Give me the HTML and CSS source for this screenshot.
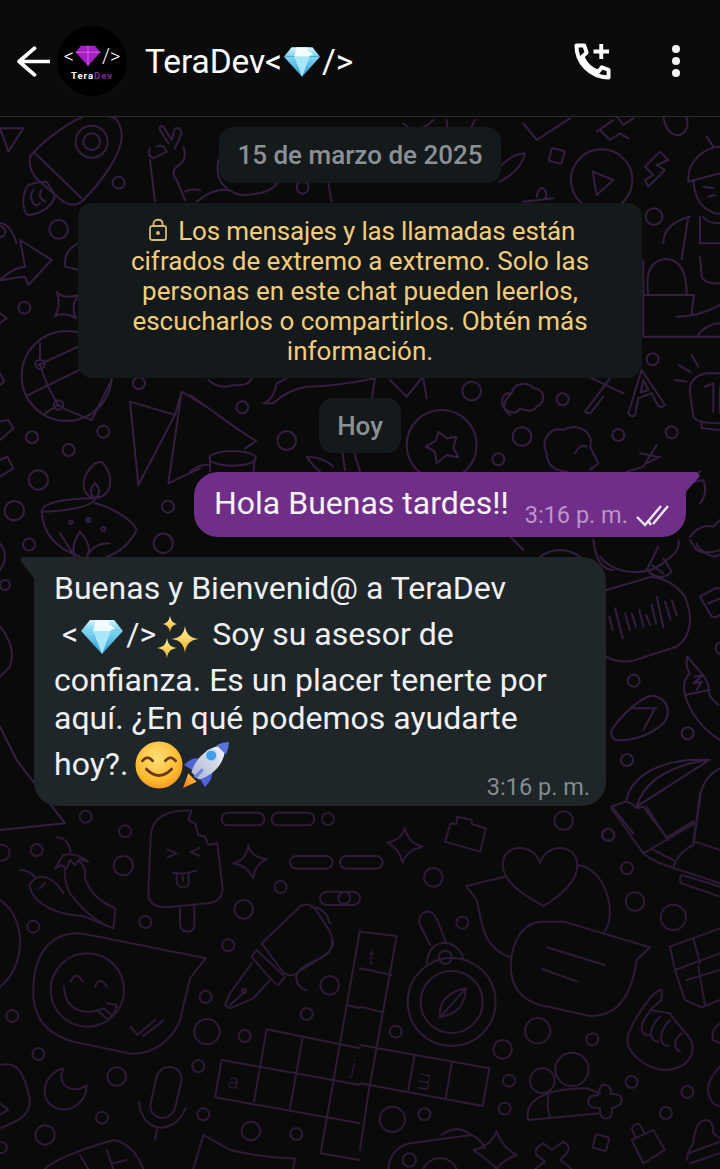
FILE: index.html
```html
<!DOCTYPE html>
<html lang="es">
<head>
<meta charset="utf-8">
<title>TeraDev</title>
<link rel="stylesheet" href="styles.css">
</head>
<body>
<svg class="defs" width="0" height="0" aria-hidden="true">
  <defs>
    <linearGradient id="gemTop" x1="0" y1="0" x2="0" y2="1"><stop offset="0" stop-color="#d8f6ff"/><stop offset="1" stop-color="#6fd0f2"/></linearGradient>
    <linearGradient id="gemLow" x1="0" y1="0" x2="0" y2="1"><stop offset="0" stop-color="#7fd6f5"/><stop offset="1" stop-color="#2f9bd6"/></linearGradient>
    <linearGradient id="spark" x1="0" y1="0" x2="0" y2="1"><stop offset="0" stop-color="#fff3a8"/><stop offset="1" stop-color="#f2b01e"/></linearGradient>
    <radialGradient id="face" cx=".45" cy=".35" r=".75"><stop offset="0" stop-color="#ffe07a"/><stop offset=".65" stop-color="#fdb92e"/><stop offset="1" stop-color="#f08a16"/></radialGradient>
    <linearGradient id="flame" x1="1" y1="0" x2="0" y2="1"><stop offset="0" stop-color="#ffd23e"/><stop offset="1" stop-color="#f5761c"/></linearGradient>
    <linearGradient id="hull" x1="0" y1="1" x2="1" y2="0"><stop offset="0" stop-color="#a9b2cc"/><stop offset="1" stop-color="#f4f6fb"/></linearGradient>
    <symbol id="gem" viewBox="0 0 40 32">
      <path fill="url(#gemLow)" d="M1 11H39L20 32Z"/>
      <path fill="#a8e6fb" d="M12 11H28L20 32Z"/>
      <path fill="url(#gemTop)" d="M9 1H31L39 11H1Z"/>
      <path fill="#f0fcff" d="M14 1H26L28 11H12Z"/>
      <path fill="#fff" d="M27 5l5 4-5 1z"/>
    </symbol>
    <symbol id="sparkles" viewBox="0 0 44 44">
      <path fill="url(#spark)" d="M29 11C30 19 34 23 43 24C34 25 30 29 29 38C28 29 24 25 15 24C24 23 28 19 29 11Z"/>
      <path fill="url(#spark)" d="M14 1C15 6 17 8 21 9C17 10 15 12 14 17C13 12 11 10 7 9C11 8 13 6 14 1Z"/>
      <path fill="url(#spark)" d="M11 23C12 29 14 32 21 33C14 34 12 37 11 43C10 37 8 34 1 33C8 32 10 29 11 23Z"/>
    </symbol>
    <symbol id="smile" viewBox="0 0 46 46">
      <circle cx="23" cy="23" r="22.500" fill="url(#face)"/>
      <path fill="none" stroke="#6b3a12" stroke-width="2.600" stroke-linecap="round" d="M7 19Q12 13 17 19M29 19Q34 13 39 19"/>
      <path fill="none" stroke="#6b3a12" stroke-width="2.800" stroke-linecap="round" d="M11 27Q23 39 35 27"/>
    </symbol>
    <symbol id="rocket" viewBox="0 0 46 46">
      <path fill="url(#flame)" d="M1 45L6 31L14 39Z"/>
      <path fill="#4d63d8" d="M2 23Q9 15 18 17L10 28Z"/>
      <path fill="#4d63d8" d="M22 44Q30 37 29 27L17 36Z"/>
      <path fill="url(#hull)" d="M9 30C13 16 26 4 41 4C43 19 31 33 16 37Z"/>
      <path fill="#5b73e0" d="M33 4Q39 1 45 1Q45 7 42 13Z"/>
      <circle cx="28" cy="14" r="5.500" fill="#3fa0ea" stroke="#c7d4f0" stroke-width="1.500"/>
      <path fill="#6e84e4" d="M11 34L19 26L21 28L14 36Z"/>
    </symbol>
  </defs>
</svg>
<div class="app">
  <svg class="doodles" viewBox="0 0 720 1169" aria-hidden="true">
    <!-- top left -->
    <g class="up" transform="translate(0 110) scale(.3333)">
      <circle cx="275" cy="95" r="48"/><circle cx="275" cy="95" r="25"/>
      <path d="M250 20C200 40 120 100 90 140C85 170 100 200 120 215L190 275Q225 295 250 270C300 220 370 130 365 70C360 40 350 20 330 20M105 130L245 265"/>
      <path d="M85 225C60 260 70 310 85 315C130 310 160 285 165 255L140 215Q110 215 85 225ZM100 240C85 260 100 300 120 280M125 240Q110 260 135 275"/>
      <path d="M0 55L70 55L25 125L15 95Z"/>
      <path d="M505 100L480 60Q475 45 490 50L515 90M515 90L525 55Q540 50 545 70L525 115M450 115Q440 135 460 145L500 125M470 110Q490 100 500 125M450 150L465 275M550 110Q565 150 530 170Q510 190 530 210L555 270M555 245Q570 235 600 240"/>
      <circle cx="356" cy="218" r="18"/><circle cx="176" cy="358" r="28"/><circle cx="73" cy="593" r="18"/><circle cx="120" cy="763" r="14"/><circle cx="176" cy="885" r="14"/><circle cx="417" cy="820" r="18"/><circle cx="96" cy="982" r="18"/><circle cx="310" cy="965" r="18"/><circle cx="206" cy="1020" r="18"/><circle cx="115" cy="1110" r="29"/><circle cx="43" cy="1202" r="29"/><circle cx="504" cy="1190" r="18"/><circle cx="490" cy="1300" r="29"/><circle cx="87" cy="1304" r="18"/><circle cx="0" cy="365" r="16"/>
      <path d="M0 510C30 480 60 470 75 470L60 390L155 450L85 525L75 500C50 500 20 510 0 510ZM0 340Q30 340 50 400"/>
      <path d="M170 545Q190 570 235 555Q210 590 228 625Q195 605 165 618Q185 585 170 545Z"/>
      <path d="M235 400Q190 420 195 470L235 480"/>
      <circle cx="200" cy="798" r="135"/>
      <path d="M115 765L235 710M85 855L300 750M120 765Q140 830 175 885Q195 900 275 930L335 810M175 885L135 910M120 700L120 745"/>
      <path d="M0 990L40 955L25 930L0 935M0 1100L40 1075L22 1040L0 1050M0 610L20 625L0 640M0 790L12 815L0 825"/>
      <path d="M390 875L525 915L415 1125ZM525 915L545 845L620 890M545 845L505 1120L600 1075"/>
      <path d="M285 1060C240 1100 240 1150 280 1165C340 1160 345 1100 305 1055ZM285 1120Q260 1145 285 1165Q310 1145 285 1120Z"/>
      <path d="M285 1165C190 1165 125 1180 125 1205C130 1280 180 1320 240 1340M285 1180C330 1190 400 1230 410 1260Q380 1320 320 1340M130 1205Q260 1200 285 1170"/>
      <circle cx="213" cy="1237" r="5"/><circle cx="265" cy="1230" r="6"/><circle cx="310" cy="1257" r="6"/>
      <path d="M180 1270L225 1340M240 1265Q210 1310 225 1340M240 1265Q280 1310 260 1340M330 1300Q280 1300 260 1340M0 1300Q30 1340 0 1380"/>
    </g>
    <!-- top centre -->
    <g class="up" transform="translate(70 120) scale(.3333)">
      <path d="M445 120Q430 200 510 225Q600 225 625 185M380 245Q430 205 470 210M775 190L785 245"/>
      <circle cx="698" cy="203" r="18"/>
      <path d="M1000 10Q1040 50 1090 0M1200 30L1215 0M1130 0Q1130 50 1180 50"/>
    </g>
    <!-- between cards -->
    <g class="up" transform="translate(190 370) scale(.3333)">
      <path d="M0 75L140 175L198 213L165 235M60 265L60 305M195 265L190 305M0 305Q30 280 60 285"/>
      <ellipse cx="128" cy="265" rx="70" ry="22"/>
      <path d="M55 30Q90 60 130 45Q175 50 185 25M220 100Q250 90 260 40L290 25M220 100L250 100Q290 60 350 50Q430 50 555 25M350 260Q400 260 430 290M350 260Q370 290 390 305M455 230L465 300M490 240L510 305M600 30L650 80L695 25M700 25L710 85M555 25L545 90"/>
      <circle cx="755" cy="225" r="105"/>
      <path d="M745 185L770 205L800 200L790 232L805 262L770 255L740 280L735 245L708 230L738 212Z"/>
      <circle cx="845" cy="63" r="28"/><circle cx="925" cy="268" r="18"/><circle cx="290" cy="212" r="28"/><circle cx="157" cy="112" r="18"/>
      <path d="M960 75Q925 110 960 135"/>
    </g>
    <!-- top right -->
    <g class="up" transform="translate(500 110) scale(.3333)">
      <path d="M70 40L110 90L210 25M290 65L340 30M350 20L370 45L400 25M300 60L330 90L360 70L385 85M490 20Q500 80 540 75Q570 60 560 20"/>
      <rect x="150" y="118" width="40" height="40" rx="6" transform="rotate(15 170 138)"/>
      <circle cx="305" cy="210" r="92"/>
      <path d="M278 185L340 210L290 255Z"/>
      <path d="M435 170L480 125L505 150L470 165L495 180L445 230L435 210L460 195Z"/>
      <path d="M0 170Q40 130 75 130Q65 180 0 215M110 260Q115 230 130 235Q145 250 135 265M70 275L160 265"/>
      <path d="M565 215C560 150 620 110 660 110M565 215L660 190M580 210Q585 280 625 300Q650 315 660 310M620 80L640 110M610 230L640 235M625 260L645 255M610 320Q620 340 660 340M600 320L600 400L660 400M600 440L605 500Q620 525 660 520"/>
      <circle cx="462" cy="320" r="25"/>
      <path d="M570 320Q490 340 490 400M430 555L582 555L575 610M445 555Q430 450 500 447Q560 450 560 555M430 680L660 680M430 450L430 680M530 620Q600 620 660 585M590 680Q620 640 660 640M565 320L545 447"/>
      <path d="M30 905C-5 900 0 840 35 850C40 815 90 815 100 835C135 835 140 880 110 890C100 910 70 900 60 895Q45 915 30 905Z"/>
      <circle cx="188" cy="868" r="18"/><circle cx="458" cy="748" r="18"/><circle cx="66" cy="980" r="28"/><circle cx="355" cy="975" r="18"/><circle cx="515" cy="967" r="18"/>
      <path d="M385 910L425 780L495 885Q480 900 470 880L455 850L415 865L405 915Q395 925 385 910ZM422 848L445 840L430 810Z"/>
      <path d="M265 800L370 850M330 805L255 905Q265 915 275 905L310 860"/>
      <path d="M575 735L595 770M535 765L570 785M525 810L560 815M570 850Q565 800 620 790L660 790M570 850L580 920Q590 940 660 940M615 830L640 820L640 905M660 830L660 910M605 940L605 955L660 960"/>
      <path d="M140 1030C120 990 150 950 190 960C230 935 285 965 270 1010L295 1060L270 1080M225 1030Q240 1000 260 1010M200 1085Q140 1080 140 1030"/>
      <path d="M470 1005L430 1070L380 1085M420 1030L470 1040M440 1060L480 1040"/>
      <path d="M530 1130Q610 1080 600 1085M560 1120L610 1110Q625 1150 600 1180M280 1290Q290 1380 340 1380M570 1280Q600 1240 640 1250L660 1230M590 1300Q600 1340 660 1320M30 1280L70 1320M120 1340Q180 1300 240 1340"/>
    </g>
    <!-- middle right -->
    <g class="up" transform="translate(600 540) scale(.3333)">
      <path d="M0 50C50 110 150 110 200 60C230 40 240 20 235 0M175 20L140 90Q180 130 215 95L190 55M155 75L190 100"/>
      <path d="M20 150L155 110Q220 120 255 170C280 230 275 290 230 320L100 362Q50 370 20 350"/>
      <path d="M28 230L38 270M45 205L68 295M75 220L90 270M95 220L108 260M118 210L130 260M138 225L150 255M155 195L168 250M170 170L190 262M195 185L212 240M215 180L230 225"/>
      <circle cx="101" cy="422" r="18"/><circle cx="263" cy="580" r="18"/><circle cx="81" cy="660" r="18"/><circle cx="25" cy="885" r="18"/>
      <path d="M35 570C60 530 130 460 165 468C205 480 215 520 190 550C150 590 80 605 50 600Q30 595 35 570ZM100 505L170 505M165 505L130 570"/>
      <path d="M262 350L300 395Q330 430 325 445L330 470L355 495M262 350Q255 380 270 400Q245 420 255 465Q280 550 360 600M255 465L330 450M285 410L310 405L280 430L305 425L290 450"/>
      <path d="M80 780C90 720 170 650 330 660M110 800C130 730 200 680 320 660M110 800L320 665M35 800L75 785Q100 790 110 805L130 800L205 900M35 800L100 880M205 890L280 845M300 760Q285 880 280 900M300 770Q310 710 360 685"/>
      <path d="M300 170L345 145L360 145M300 170L335 230Q345 235 360 225M325 190L360 175M270 0L290 30L340 50L360 45"/>
      <circle cx="365" cy="325" r="18"/>
    </g>
    <!-- left of incoming bubble -->
    <g class="up" transform="translate(0 560) scale(.3333)">
      <circle cx="15" cy="75" r="15"/>
      <path d="M0 200Q50 260 30 320L0 350M0 500L50 600L195 790L0 810"/>
    </g>
    <!-- bottom left -->
    <g transform="translate(0 800) scale(.3333)">
      <circle cx="257" cy="50" r="18"/><circle cx="375" cy="94" r="18"/><circle cx="110" cy="150" r="18"/><circle cx="370" cy="197" r="29"/><circle cx="984" cy="57" r="18"/><circle cx="842" cy="261" r="18"/><circle cx="1033" cy="294" r="18"/><circle cx="731" cy="328" r="28"/><circle cx="100" cy="380" r="18"/><circle cx="436" cy="366" r="18"/><circle cx="685" cy="436" r="18"/><circle cx="989" cy="556" r="28"/><circle cx="617" cy="591" r="18"/><circle cx="37" cy="648" r="18"/><circle cx="920" cy="642" r="18"/><circle cx="621" cy="695" r="38"/><circle cx="734" cy="708" r="18"/><circle cx="115" cy="762" r="18"/><circle cx="350" cy="830" r="28"/><circle cx="595" cy="799" r="18"/><circle cx="610" cy="943" r="18"/><circle cx="306" cy="953" r="18"/><circle cx="135" cy="1005" r="29"/><circle cx="753" cy="993" r="28"/><circle cx="889" cy="1002" r="18"/><circle cx="5" cy="1043" r="16"/><circle cx="5" cy="158" r="24"/>
      <rect x="665" y="38" width="128" height="38" rx="19"/><rect x="815" y="38" width="128" height="38" rx="19"/><rect x="870" y="168" width="128" height="38" rx="19"/><rect x="1020" y="168" width="128" height="38" rx="19"/><rect x="960" y="275" width="120" height="40" rx="20"/>
      <path d="M575 32C500 30 455 50 452 110L445 280C445 310 465 322 500 322L625 310C660 305 668 285 668 265L652 130L625 135L615 110L595 105L585 70L565 60Z"/>
      <path d="M540 325L540 375Q545 395 562 395Q583 395 583 375L583 318M503 148L530 160L503 172M598 143L572 157L600 168M518 218Q555 225 588 212M530 222L530 245Q535 262 550 262Q568 262 566 240L565 218M548 228L549 242"/>
      <path d="M745 135Q750 170 800 178Q765 190 760 235Q740 195 700 190Q740 180 745 135Z"/>
      <path d="M170 112Q205 115 212 155M165 205L190 165Q225 155 265 185L238 178L225 195L210 180L200 205L185 195ZM238 185Q260 200 255 235Q275 295 345 325Q345 350 340 385Q270 360 210 280Q190 240 195 205M300 300L345 325"/>
      <path d="M60 210Q90 210 108 235M88 255Q110 220 145 235Q175 250 190 280M88 255Q95 285 110 298Q160 345 250 348L340 385M120 265L135 250"/>
      <path d="M235 400C150 400 105 460 100 560C95 640 130 700 220 725L385 760C470 770 535 700 545 640L570 535L617 475L270 405Z"/>
      <circle cx="262" cy="570" r="110"/>
      <path d="M192 560C195 630 250 650 310 625M212 545Q230 510 248 545M285 560Q300 525 320 560M290 630L325 660Q345 640 350 615L320 610M310 625L335 645M392 680L412 705L465 660M430 708L490 662"/>
      <path d="M190 805C130 820 110 900 170 925C215 940 260 905 260 855C225 885 165 860 190 805Z"/>
      <path d="M470 830C480 790 545 790 545 840L525 925C510 970 445 960 452 910ZM417 905C425 1000 520 1010 557 925M472 985L465 1020"/>
      <path d="M0 300C80 350 80 500 0 560M0 795C50 785 70 810 90 900C90 950 50 965 0 985M0 910L25 930L0 945"/>
      <path d="M785 430L900 320Q920 305 945 325L990 395Q1005 430 985 460L880 525Q860 530 845 510ZM935 322Q975 320 990 370M755 470L770 450L855 530L835 555Q825 555 755 470ZM755 490L690 580L675 615L690 625L760 595L810 540M690 615L735 575M1000 420Q1005 450 950 480Q880 510 890 540Q895 565 920 570"/>
      <circle cx="732" cy="573" r="6"/>
      <path d="M800 688L1080 745M800 688L762 905M665 780L1080 855M665 780L645 892L1080 970M908 712L870 925M1080 390L962 1060L1080 1080M1040 615L1080 625"/>
      <path d="M580 1107L610 1005L690 1050Q800 1075 885 1075L880 1107M135 1107Q170 1070 340 1020Q400 1030 430 1107M240 1065L265 1107M320 1050L340 1107M340 1090L380 1080"/>
      <text class="letter" transform="translate(680 862) rotate(12)">a</text>
      <text class="letter" transform="translate(1050 820) rotate(10)">j</text>
    </g>
    <!-- bottom right -->
    <g transform="translate(360 800) scale(.3333)">
      <circle cx="611" cy="62" r="28"/><circle cx="744" cy="104" r="18"/><circle cx="220" cy="232" r="28"/><circle cx="801" cy="205" r="18"/><circle cx="825" cy="305" r="28"/><circle cx="940" cy="352" r="38"/><circle cx="307" cy="368" r="18"/><circle cx="533" cy="692" r="38"/><circle cx="697" cy="718" r="18"/><circle cx="107" cy="695" r="18"/><circle cx="428" cy="748" r="28"/><circle cx="447" cy="842" r="18"/><circle cx="815" cy="846" r="18"/><circle cx="982" cy="876" r="18"/><circle cx="434" cy="926" r="18"/><circle cx="918" cy="939" r="18"/><circle cx="97" cy="958" r="38"/><circle cx="193" cy="943" r="18"/>
      <rect x="702" y="1007" width="42" height="42" rx="6" transform="rotate(15 723 1028)"/>
      <path d="M135 85Q145 130 188 140Q140 150 128 188Q118 145 82 128Q125 120 135 85Z"/>
      <path d="M255 125L272 70L290 72L292 50L335 60L335 72L378 85L360 155Z"/>
      <path d="M540 190C525 130 430 125 428 195C430 250 500 290 550 318C600 290 655 240 652 195C650 130 560 125 540 190Z"/>
      <path d="M652 195C710 200 750 270 750 340Q748 380 730 400M435 230L318 258L350 300C365 350 360 440 450 472"/>
      <path d="M560 365C490 360 455 420 452 500C455 570 490 600 540 615L690 648C770 650 815 590 830 480L870 442L610 365ZM560 442L735 495M545 507L653 545"/>
      <circle cx="275" cy="606" r="132"/><circle cx="275" cy="606" r="93"/><circle cx="256" cy="472" r="20"/>
      <path d="M200 490C205 450 220 430 255 428C285 430 310 460 310 480M210 435L178 370C175 330 215 320 232 360L258 428M317 565C315 620 290 640 240 652C235 600 270 575 317 565ZM240 652L317 565"/>
      <path d="M905 570C880 565 805 680 802 720C805 770 870 810 920 810C980 805 1000 770 998 735C990 700 960 690 930 640L870 630L905 600ZM870 635C830 680 845 710 870 705M900 650C860 690 870 725 895 725M930 660C890 700 900 740 925 738M965 700C940 720 940 745 960 755"/>
      <path d="M930 440L1080 385M930 440L945 510L1080 460M1000 415L1020 490M945 510L975 600L1025 622L1080 600M1015 500L1035 615M980 540L1080 510"/>
      <circle cx="636" cy="808" r="50"/><circle cx="547" cy="842" r="37"/>
      <path d="M505 960C490 900 560 865 680 865L720 880M505 960L720 940M565 885Q560 920 570 955M735 855Q720 850 715 885Q680 885 685 910Q690 925 720 925Q720 960 740 955Q760 955 755 925Q790 915 785 895Q780 880 752 882Q755 855 735 855Z"/>
      <path d="M815 1020L880 990L915 1050L850 1090ZM828 1015L815 985Q825 965 840 975L855 1003"/>
      <path d="M110 408L0 395M110 408L25 880L0 1050M0 505L95 525M0 620L70 637M0 735L388 805L368 918L0 850M163 770L145 870M275 790L257 895"/>
      <path d="M85 1107Q90 1045 150 1030L335 1005Q365 1020 375 1045M245 1005Q290 970 335 1005M410 995Q425 1040 470 1065Q430 1080 410 1107M410 995Q390 1040 340 1050Q385 1080 410 1107M550 1030L575 1050L610 1025Q635 1040 620 1060L600 1080L635 1107M550 1030Q520 1045 530 1065L555 1085L525 1107"/>
      <circle cx="148" cy="1080" r="20"/><circle cx="240" cy="1130" r="55"/>
      <path d="M755 25L850 160C880 190 950 205 1080 250M860 20L920 115M850 160L1005 70M1020 0L1000 135Q950 160 940 205M880 150L940 180M1005 125L1080 150M965 225L1080 260M965 250L1080 290M965 225Q955 240 965 250"/>
      <path d="M980 1080Q985 1050 1000 1030Q1005 960 1040 960Q1060 960 1060 1000L1080 1015M985 1060L1080 1025M990 1090L1080 1060M1080 670Q1050 690 1060 720L1080 730M1080 800Q1020 860 1060 910L1080 920"/>
      <text class="letter" transform="translate(22 490) rotate(8)">t</text>
      <text class="letter" transform="translate(180 815) rotate(100)">m</text>
    </g>
  </svg>

  <header class="topbar">
    <svg class="back" viewBox="0 0 32 30" aria-hidden="true"><path d="M2 15H31M17 2L2 15L17 28"/></svg>
    <div class="avatar">
      <div class="logo-row">
        <span class="logo-code">&lt;</span>
        <svg class="logo-gem" viewBox="0 0 40 32" aria-hidden="true"><path fill="#a51fc4" d="M9 1H31L39 11L20 32L1 11Z"/><path fill="none" stroke="#d86ae8" stroke-width="1.400" d="M1 11H39M20 1V32"/></svg>
        <span class="logo-code">/&gt;</span>
      </div>
      <div class="logo-name">Tera<span class="logo-dev">Dev</span></div>
    </div>
    <div class="title">TeraDev&lt;<svg class="title-gem" aria-hidden="true"><use href="#gem"/></svg>/&gt;</div>
    <svg class="addcall" viewBox="0 0 38 38" aria-hidden="true"><path d="M2.500 2.500H10.500L13 10L8.500 14C12 22 17 27 25 29.500L28.500 25L35.500 27.500V35.500C16 35 2.500 20 2.500 2.500Z"/><path d="M28 1V16.500M20 8.700H36"/></svg>
    <div class="menu" aria-hidden="true"><span class="dot"></span><span class="dot"></span><span class="dot"></span></div>
  </header>

  <main class="chat">
    <div class="chip chip-date">15 de marzo de 2025</div>
    <div class="notice">
      <svg class="lock" viewBox="0 0 18 23" aria-hidden="true"><rect x="1" y="8" width="16" height="14" rx="2"/><path d="M4.500 8V5.500C4.500 .5 13.500 .5 13.500 5.500V8"/><circle class="lock-dot" cx="9" cy="15" r="2"/></svg>
      <span class="notice-first">Los mensajes y las llamadas están</span><br>cifrados de extremo a extremo. Solo las<br>personas en este chat pueden leerlos,<br>escucharlos o compartirlos. Obtén más<br>información.
    </div>
    <div class="chip chip-today">Hoy</div>
    <div class="bubble out">
      <span class="out-text">Hola Buenas tardes!!</span>
      <span class="time out-time">3:16 p. m.</span>
      <svg class="ticks" viewBox="0 0 33 22" aria-hidden="true"><path d="M1 12L9 20L25 1M17 19L32 1M13 17L15 20"/></svg>
    </div>
    <div class="bubble in">
      <div class="line">Buenas y Bienvenid@ a TeraDev</div>
      <div class="line line-gem">&lt;<svg class="emoji gem" aria-hidden="true"><use href="#gem"/></svg>/&gt;<svg class="emoji sparkles" aria-hidden="true"><use href="#sparkles"/></svg> Soy su asesor de</div>
      <div class="line">confianza. Es un placer tenerte por</div>
      <div class="line line-short">aquí. ¿En qué podemos ayudarte</div>
      <div class="line line-last">hoy?. <svg class="emoji face" aria-hidden="true"><use href="#smile"/></svg><svg class="emoji rocket" aria-hidden="true"><use href="#rocket"/></svg><span class="time in-time">3:16 p. m.</span></div>
    </div>
  </main>
</div>
</body>
</html>
```

FILE: styles.css
```css
* { box-sizing: border-box; }
html, body { margin: 0; padding: 0; background: #0a0a0b; }
body { width: 720px; height: 1169px; overflow: hidden; font-family: Roboto, "Liberation Sans", sans-serif; color: #eef0f1; }
.defs { position: absolute; }
.app { position: relative; width: 720px; height: 1169px; overflow: hidden; }
.doodles { position: absolute; left: 0; top: 0; width: 720px; height: 1169px; fill: none; stroke: #2d1b37; stroke-width: 6; stroke-linecap: round; stroke-linejoin: round; }
.up { stroke: #341f40; }
.letter { font: 300 62px Roboto, sans-serif; fill: #2d1b37; stroke: none; }

.topbar { position: relative; display: flex; align-items: center; height: 117px; padding: 12px 0 6px 17px; background: #0b0b0c; border-bottom: 1px solid #2a2a2b; }
.back { width: 33px; height: 31px; fill: none; stroke: #fff; stroke-width: 3.600; stroke-linecap: round; stroke-linejoin: round; }
.avatar { width: 70px; height: 70px; margin-left: 7px; border-radius: 50%; background: #000; display: flex; flex-direction: column; align-items: center; justify-content: center; padding-top: 2px; }
.logo-row { display: flex; align-items: center; gap: 1px; color: #fff; font-size: 20px; line-height: 24px; }
.logo-code { font-weight: 300; }
.logo-gem { width: 26px; height: 23px; }
.logo-name { font-size: 9.500px; font-weight: 700; letter-spacing: 1px; color: #fff; line-height: 11px; margin-top: 2px; }
.logo-dev { color: #7d2a94; }
.title { display: flex; align-items: center; margin-left: 18px; font-size: 33.500px; letter-spacing: -.1px; color: #fff; flex: 1; }
.title-gem { width: 38px; height: 31px; margin: 1px 1px 0 1px; }
.addcall { width: 37px; height: 37px; margin-right: 61px; fill: none; stroke: #fff; stroke-width: 4; stroke-linejoin: round; stroke-linecap: butt; }
.menu { display: flex; flex-direction: column; gap: 4px; margin-right: 40px; }
.dot { width: 8px; height: 8px; border-radius: 50%; background: #f2f2f2; }

.chat { position: relative; display: flex; flex-direction: column; align-items: flex-start; padding-top: 10px; }
.chip { align-self: center; display: flex; align-items: center; justify-content: center; background: #14191c; border-radius: 14px; color: #8b9094; font-weight: 500; font-size: 26px; }
.chip-date { width: 282px; height: 56px; }
.chip-today { width: 82px; height: 55px; margin-top: 215px; }
.notice { position: absolute; left: 78px; top: 86px; width: 564px; height: 175px; padding-top: 13px; background: #14191c; border-radius: 14px; text-align: center; color: #f3cd7b; font-size: 26px; line-height: 30px; }
.notice-first { letter-spacing: -.18px; }
.lock { width: 18px; height: 23px; margin: 0 5px 0 4px; vertical-align: -1px; fill: none; stroke: #d9b86f; stroke-width: 1.800; }
.lock-dot { fill: #d9b86f; stroke: none; }

.bubble { position: relative; font-size: 32px; }
.out { align-self: flex-end; display: flex; align-items: flex-start; width: 492px; height: 65px; margin: 19px 34px 0 0; padding: 12px 0 0 20px; background: #6f2f88; border-radius: 24px 0 24px 24px; color: #f7f2f8; }
.out::after { content: ""; position: absolute; right: -14px; top: 0; width: 16px; height: 22px; background: #6f2f88; clip-path: polygon(0 0, 80% 0, 100% 18%, 0 100%); }
.out-text { line-height: 38px; }
.time { font-size: 23.500px; }
.out-time { margin: 17px 0 0 16px; line-height: 28px; color: #bd94cb; }
.ticks { width: 33px; height: 22px; margin: 21px 0 0 8px; fill: none; stroke: #efe7f2; stroke-width: 2.400; }
.in { width: 572px; height: 249px; margin: 20px 0 0 34px; padding: 8px 0 0 20px; background: #1f2629; border-radius: 0 24px 24px 24px; }
.in::before { content: ""; position: absolute; left: -14px; top: 0; width: 16px; height: 24px; background: #1f2629; clip-path: polygon(10% 0, 100% 0, 100% 100%, 0 12%); }
.line { height: 46px; line-height: 46px; white-space: nowrap; }
.line-short { height: 30px; line-height: 30px; }
.line-gem { padding-left: 8px; }
.line-last { position: relative; height: 62px; line-height: 62px; }
.emoji { vertical-align: middle; }
.gem { width: 44px; height: 37px; margin: 0 2px; }
.sparkles { width: 44px; height: 44px; margin-right: 4px; }
.face { width: 48px; height: 48px; margin: 0 0 4px -1px; }
.rocket { width: 48px; height: 48px; margin: 0 0 4px -1px; }
.in-time { position: absolute; right: 16px; top: 40px; line-height: 28px; color: #858c90; }
```
